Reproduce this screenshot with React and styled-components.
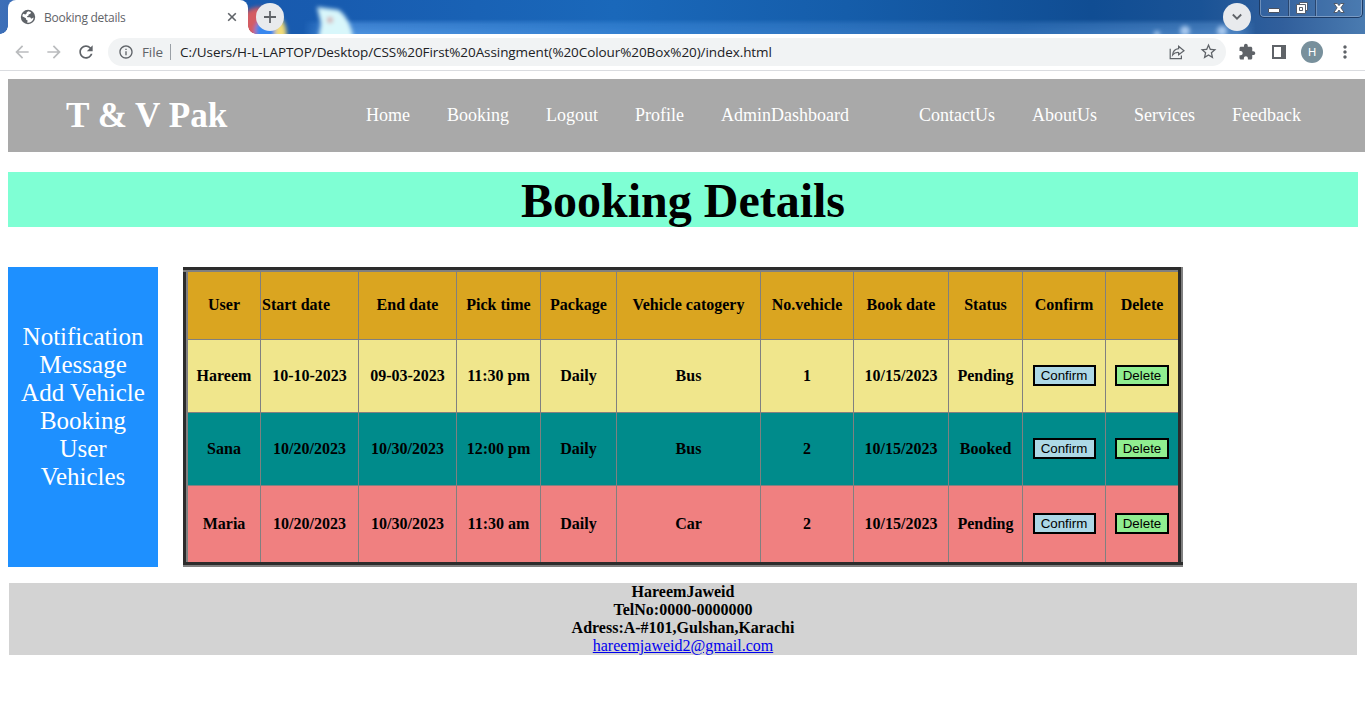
import React from "react";
import styled, { createGlobalStyle } from "styled-components";

const GlobalStyle = createGlobalStyle`
  * { box-sizing: border-box; }
  html, body { margin: 0; padding: 0; background: #fff; overflow: hidden; }
  body { font-family: "Liberation Serif", "Times New Roman", serif; font-size: 16px; color: #000; }
`;

const Window = styled.div`
  width: 1365px;
  height: 725px;
  overflow: hidden;
  display: flex;
  flex-direction: column;
  background: #fff;
`;

/* ---------- browser chrome ---------- */
const TabStrip = styled.div`
  position: relative;
  height: 34px;
  display: flex;
  align-items: flex-start;
  padding-left: 8px;
  overflow: hidden;
`;

const Wallpaper = styled.svg`
  position: absolute;
  inset: 0;
  display: block;
`;

const Tab = styled.div`
  position: relative;
  width: 240px;
  height: 34px;
  border-radius: 8px 8px 0 0;
  background: #fff;
  display: flex;
  align-items: center;
  padding: 0 10px 0 12px;
  &::before, &::after {
    content: "";
    position: absolute;
    bottom: 0;
    width: 8px;
    height: 8px;
  }
  &::before { left: -8px; background: radial-gradient(circle at 0 0, transparent 7.5px, #fff 8px); }
  &::after { right: -8px; background: radial-gradient(circle at 100% 0, transparent 7.5px, #fff 8px); }
`;

const TabTitle = styled.span`
  flex: 1;
  margin-left: 8px;
  font: 12px "Open Sans", "Noto Sans", sans-serif;
  letter-spacing: -0.25px;
  color: #5f6368;
  white-space: nowrap;
`;

const RoundButton = styled.div`
  position: relative;
  width: 28px;
  height: 28px;
  margin: 3px 0 0 ${(p) => p.$gap};
  border-radius: 50%;
  background: #e8eaed;
  display: flex;
  align-items: center;
  justify-content: center;
`;

const Caption = styled.div`
  position: relative;
  display: flex;
  width: 104px;
  height: 18px;
  margin-left: 8px;
  border: 1px solid #1c3b66;
  border-top: 0;
  border-radius: 0 0 5px 5px;
  box-shadow: inset 0 -1px 0 0 #7a9bc4, inset 1px 0 0 0 #6d8fba, inset -1px 0 0 0 #7a9bc4;
  background: rgba(80, 125, 180, 0.2);
`;

const CaptionButton = styled.div`
  width: ${(p) => p.$w};
  height: 16px;
  display: flex;
  align-items: center;
  justify-content: center;
  border-right: ${(p) => (p.$last ? "0" : "1px solid #29466f")};
  box-shadow: ${(p) => (p.$last ? "none" : "1px 0 0 0 #6d8fba")};
`;

const Toolbar = styled.div`
  height: 37px;
  display: flex;
  align-items: center;
  padding: 0 0 1px 12px;
  border-bottom: 1px solid #dadce0;
  background: #fff;
`;

const NavIcons = styled.div`
  display: flex;
  gap: 12px;
  width: 96px;
`;

const AddressBar = styled.div`
  width: 1118px;
  height: 28px;
  border-radius: 14px;
  background: #f1f3f4;
  display: flex;
  align-items: center;
  padding: 0 8px 0 10px;
  font: 14px "Open Sans", "Noto Sans", sans-serif;
`;

const Scheme = styled.span`
  margin-left: 8px;
  width: 28px;
  color: #5f6368;
  font-size: 13.5px;
  letter-spacing: -0.1px;
`;

const Divider = styled.span`
  width: 1px;
  height: 16px;
  margin-right: 9px;
  background: #9aa0a6;
`;

const Url = styled.span`
  flex: 1;
  color: #202124;
  white-space: nowrap;
  font-size: 13.5px;
  letter-spacing: ${(p) => p.$track};
`;

const BarIcons = styled.div`
  display: flex;
  gap: 12px;
`;

const ToolIcons = styled.div`
  display: flex;
  align-items: center;
  gap: 13px;
  margin-left: 12px;
`;

const Avatar = styled.div`
  width: 22px;
  height: 22px;
  margin: 0 -1px;
  border-radius: 50%;
  background: #78909c;
  color: #fff;
  display: flex;
  align-items: center;
  justify-content: center;
  font: 11.5px Roboto, sans-serif;
`;

/* ---------- page ---------- */
const Page = styled.div`
  padding: 8px 0 0 8px;
`;

const Header = styled.header`
  height: 73px;
  background: darkgray;
  color: #fff;
  display: flex;
  align-items: center;
  padding-left: 58px;
`;

const Brand = styled.div`
  width: 300px;
  font-size: 35.2px;
  font-weight: bold;
  white-space: nowrap;
`;

const Nav = styled.nav`
  display: flex;
  font-size: 18px;
`;

const NavLink = styled.span`
  width: ${(p) => p.$w}px;
  white-space: nowrap;
`;

const Title = styled.h1`
  width: 1350px;
  height: 55px;
  margin: 20px 0 40px;
  background: aquamarine;
  text-align: center;
  font-size: 48px;
  line-height: 57px;
`;

const Content = styled.main`
  display: flex;
  gap: 25px;
`;

const Sidebar = styled.aside`
  width: 150px;
  height: 300px;
  padding-top: 56px;
  background: dodgerblue;
  color: #fff;
  text-align: center;
  font-size: 25px;
  line-height: 28px;
`;

const Table = styled.table`
  width: 1000px;
  height: 300px;
  table-layout: fixed;
  border-collapse: collapse;
  border: 5px groove gray;
  font-weight: bold;
`;

const Row = styled.tr`
  height: ${(p) => p.$h}px;
  background: ${(p) => p.$bg};
`;

const Cell = styled.td`
  padding: 1px 1px ${(p) => p.$bottom || "1px"};
  border: 1px solid gray;
  text-align: ${(p) => p.$align || "center"};
  vertical-align: middle;
  white-space: nowrap;
`;

const ActionButton = styled.button`
  display: inline-block;
  height: 21px;
  width: ${(p) => p.$w};
  padding: 1px 0;
  border: 2px solid #000;
  border-radius: 0;
  background: ${(p) => p.$bg};
  color: #000;
  font: 13.333px/15px "Liberation Sans", Arial, sans-serif;
`;

const Footer = styled.footer`
  width: 1348px;
  height: 72px;
  margin: 16px 0 0 1px;
  background: lightgray;
  text-align: center;
  line-height: 18px;
  font-weight: bold;
`;

const MailLink = styled.span`
  color: #0000ee;
  font-weight: normal;
  text-decoration: underline;
`;

const G = "#5f6368";

function Icon({ d, color = G, size = 20 }) {
  return (
    <svg width={size} height={size} viewBox="0 0 24 24" fill={color}>
      <path d={d} />
    </svg>
  );
}

function Desktop() {
  return (
    <Wallpaper width="1365" height="34" viewBox="0 0 1365 34">
      <defs>
        <linearGradient id="sky" x1="0" x2="1" y1="0" y2="0">
          <stop offset="0" stopColor="#3d6fb8" />
          <stop offset="0.1" stopColor="#1957ac" />
          <stop offset="0.25" stopColor="#185cb0" />
          <stop offset="0.45" stopColor="#1a68ba" />
          <stop offset="0.62" stopColor="#155daa" />
          <stop offset="0.8" stopColor="#104d93" />
          <stop offset="0.88" stopColor="#1a5396" />
          <stop offset="0.94" stopColor="#315f9c" />
          <stop offset="1" stopColor="#4a7bb0" />
        </linearGradient>
        <linearGradient id="bar" x1="0" x2="1" y1="0" y2="0">
          <stop offset="0" stopColor="#4f93df" stopOpacity="0" />
          <stop offset="0.03" stopColor="#4f93df" />
          <stop offset="0.35" stopColor="#3480d0" />
          <stop offset="0.75" stopColor="#2e6db4" />
          <stop offset="0.98" stopColor="#4d84c2" />
          <stop offset="1" stopColor="#4d84c2" stopOpacity="0" />
        </linearGradient>
        <linearGradient id="fade" x1="0" x2="0" y1="0" y2="1">
          <stop offset="0" stopColor="#000" />
          <stop offset="0.35" stopColor="#aaa" />
          <stop offset="1" stopColor="#fff" />
        </linearGradient>
        <mask id="barMask"><rect x="300" y="19" width="960" height="15" fill="url(#fade)" /></mask>
        <filter id="softer" x="-30%" y="-30%" width="160%" height="160%"><feGaussianBlur stdDeviation="2" /></filter>
      </defs>
      <rect width="1365" height="34" fill="url(#sky)" />
      <rect x="303" y="19" width="953" height="15" fill="url(#bar)" mask="url(#barMask)" />
      <g filter="url(#softer)">
        <path d="M244 44V14Q252 5 266 8V24L258 44Z" fill="#d45b62" />
        <circle cx="268" cy="31" r="13" fill="#3987ee" />
        <path d="M276 15Q289 21 286 44H274Z" fill="#f3dc77" />
      </g>
      <g filter="url(#softer)">
        <path d="M317 7L339 10Q353 21 354 46H317L321 24Z" fill="#d9f7fb" />
        <circle cx="330" cy="20" r="3" fill="#d4a9ac" />
      </g>
      <g filter="url(#softer)" fill="#a8c9ef">
        <circle cx="1157" cy="34" r="3" />
        <circle cx="1185" cy="31" r="5" />
        <circle cx="1222" cy="31" r="5" />
      </g>
    </Wallpaper>
  );
}

function Browser() {
  return (
    <>
      <TabStrip>
        <Desktop />
        <Tab>
          <svg width="16" height="16" viewBox="0 0 16 16">
            <circle cx="8" cy="8" r="7.2" fill={G} />
            <path d="M8.4 2.3 11 3.2 10.4 4.8 8.6 5.4 8.4 6.8 7 7.2 7.4 8.2H10.2L11.2 9.8 13.7 8.6A5.8 5.8 0 0 1 7.2 13.8L7.6 11.6 6 10.6 5.9 9.2 2.3 7.2A5.8 5.8 0 0 1 3.2 4.8L5.4 5.6 6.6 4.6 6.8 3.2Z" fill="#fff" />
          </svg>
          <TabTitle>Booking details</TabTitle>
          <svg width="12" height="12" viewBox="0 0 12 12" stroke={G} strokeWidth="1.6">
            <path d="M2.2 2.2 9.8 9.8M9.8 2.2 2.2 9.8" />
          </svg>
        </Tab>
        <RoundButton $gap="8px">
          <svg width="14" height="14" viewBox="0 0 14 14" stroke={G} strokeWidth="1.8"><path d="M7 1V13M1 7H13" /></svg>
        </RoundButton>
        <RoundButton $gap="939px">
          <svg width="12" height="8" viewBox="0 0 12 8" fill="none" stroke={G} strokeWidth="1.8"><path d="M1.8 1.5 6 5.7 10.2 1.5" /></svg>
        </RoundButton>
        <Caption>
          <CaptionButton $w="29px">
            <svg width="14" height="14" viewBox="0 0 14 14"><rect x="1.5" y="7.5" width="11" height="4" rx=".5" fill="#fff" stroke="#4b5260" /></svg>
          </CaptionButton>
          <CaptionButton $w="27px">
            <svg width="14" height="14" viewBox="0 0 14 14" fill="#fff" stroke="#4b5260" strokeWidth=".9" fillRule="evenodd">
              <path d="M4.5 1.5H12.5V9.5H4.5Z" />
              <path d="M1.5 3.5H10.5V12.5H1.5ZM4.5 6.5H7.5V9.5H4.5Z" />
            </svg>
          </CaptionButton>
          <CaptionButton $w="46px" $last>
            <svg width="14" height="12" viewBox="0 0 14 12"><path d="M2 1.5H5.3L7 3.6 8.7 1.5H12L8.9 5.8 12.2 10.5H8.8L7 8 5.2 10.5H1.8L5.1 5.8Z" fill="#fff" stroke="#4b5260" strokeWidth=".9" /></svg>
          </CaptionButton>
        </Caption>
      </TabStrip>
      <Toolbar>
        <NavIcons>
          <Icon color="#babcbe" d="M20 11H7.83l5.59-5.59L12 4l-8 8 8 8 1.41-1.41L7.83 13H20v-2z" />
          <Icon color="#babcbe" d="M12 4l-1.41 1.41L16.17 11H4v2h12.17l-5.58 5.59L12 20l8-8z" />
          <Icon d="M17.65 6.35C16.2 4.9 14.21 4 12 4c-4.42 0-7.99 3.58-7.99 8s3.57 8 7.99 8c3.73 0 6.84-2.55 7.73-6h-2.08c-.82 2.33-3.04 4-5.65 4-3.31 0-6-2.69-6-6s2.69-6 6-6c1.66 0 3.14.69 4.22 1.78L13 11h7V4l-2.35 2.35z" />
        </NavIcons>
        <AddressBar>
          <Icon size={16} d="M11 7h2v2h-2zm0 4h2v6h-2zm1-9C6.48 2 2 6.48 2 12s4.48 10 10 10 10-4.48 10-10S17.52 2 12 2zm0 18c-4.41 0-8-3.59-8-8s3.59-8 8-8 8 3.59 8 8-3.59 8-8 8z" />
          <Scheme>File</Scheme>
          <Divider />
          <Url $track="-0.076px">C:/Users/H-L-LAPTOP/Desktop/CSS%20First%20Assingment(%20Colour%20Box%20)/index.html</Url>
          <BarIcons>
            <svg width="20" height="20" viewBox="0 0 20 20" fill="none" stroke={G} strokeWidth="1.2">
              <path d="M3.2 6.8V16.6H14.4V13.6M11.6 4.2 17 8.7 11.6 12.8V10.5C8.8 10.3 7 11.2 5.6 13 5.9 9.6 8 7.1 11.6 6.7Z" />
            </svg>
            <Icon size={19} d="M22 9.24l-7.19-.62L12 2 9.19 8.63 2 9.24l5.46 4.73L5.82 21 12 17.27 18.18 21l-1.63-7.03L22 9.24zM12 15.4l-3.76 2.27 1-4.28-3.32-2.88 4.38-.38L12 6.1l1.71 4.04 4.38.38-3.32 2.88 1 4.28L12 15.4z" />
          </BarIcons>
        </AddressBar>
        <ToolIcons>
          <Icon d="M20.5 11H19V7c0-1.1-.9-2-2-2h-4V3.5C13 2.12 11.88 1 10.5 1S8 2.12 8 3.5V5H4c-1.1 0-1.99.9-1.99 2v3.8H3.5c1.49 0 2.7 1.21 2.7 2.7s-1.21 2.7-2.7 2.7H2V20c0 1.1.9 2 2 2h3.8v-1.5c0-1.49 1.21-2.7 2.7-2.7 1.49 0 2.7 1.21 2.7 2.7V22H17c1.1 0 2-.9 2-2v-4h1.5c1.38 0 2.5-1.12 2.5-2.5S21.88 11 20.5 11z" size={18} />
          <svg width="20" height="20" viewBox="0 0 20 20" fill={G} fillRule="evenodd"><path d="M3 3H17V17H3ZM5 5V15H12V5Z" /></svg>
          <Avatar>H</Avatar>
          <Icon d="M12 8c1.1 0 2-.9 2-2s-.9-2-2-2-2 .9-2 2 .9 2 2 2zm0 2c-1.1 0-2 .9-2 2s.9 2 2 2 2-.9 2-2-.9-2-2-2zm0 6c-1.1 0-2 .9-2 2s.9 2 2 2 2-.9 2-2-.9-2-2-2z" />
        </ToolIcons>
      </Toolbar>
    </>
  );
}

const LINKS = [
  ["Home", 81], ["Booking", 99], ["Logout", 89], ["Profile", 86], ["AdminDashboard", 198],
  ["ContactUs", 113], ["AboutUs", 102], ["Services", 98], ["Feedback", 72],
];
const SIDE = ["Notification", "Message", "Add Vehicle", "Booking", "User", "Vehicles"];
const COLS = [75, 98, 98, 84, 76, 144, 93, 95, 74, 83, 75];
const HEAD = ["User", "Start date", "End date", "Pick time", "Package", "Vehicle catogery", "No.vehicle", "Book date", "Status", "Confirm", "Delete"];
const ROWS = [
  { bg: "khaki", h: 73, cells: ["Hareem", "10-10-2023", "09-03-2023", "11:30 pm", "Daily", "Bus", "1", "10/15/2023", "Pending"] },
  { bg: "darkcyan", h: 73, cells: ["Sana", "10/20/2023", "10/30/2023", "12:00 pm", "Daily", "Bus", "2", "10/15/2023", "Booked"] },
  { bg: "lightcoral", h: 79, cells: ["Maria", "10/20/2023", "10/30/2023", "11:30 am", "Daily", "Car", "2", "10/15/2023", "Pending"] },
];

export default function App() {
  return (
    <Window>
      <GlobalStyle />
      <Browser />
      <Page>
        <Header>
          <Brand>T &amp; V Pak</Brand>
          <Nav>
            {LINKS.map(([label, w]) => <NavLink key={label} $w={w}>{label}</NavLink>)}
          </Nav>
        </Header>
        <Title>Booking Details</Title>
        <Content>
          <Sidebar>{SIDE.map((s) => <div key={s}>{s}</div>)}</Sidebar>
          <Table>
            <colgroup>{COLS.map((w, i) => <col key={i} width={w} />)}</colgroup>
            <tbody>
              <Row $bg="goldenrod" $h={70}>
                {HEAD.map((h) => <Cell key={h} $bottom="3px" $align={h === "Start date" ? "left" : "center"}>{h}</Cell>)}
              </Row>
              {ROWS.map((r) => (
                <Row key={r.bg} $bg={r.bg} $h={r.h}>
                  {r.cells.map((c, i) => <Cell key={i}>{c}</Cell>)}
                  <Cell $bottom="3px"><ActionButton $w="63px" $bg="lightblue">Confirm</ActionButton></Cell>
                  <Cell $bottom="3px"><ActionButton $w="54px" $bg="lightgreen">Delete</ActionButton></Cell>
                </Row>
              ))}
            </tbody>
          </Table>
        </Content>
        <Footer>
          <div>HareemJaweid</div>
          <div>TelNo:0000-0000000</div>
          <div>Adress:A-#101,Gulshan,Karachi</div>
          <MailLink>hareemjaweid2@gmail.com</MailLink>
        </Footer>
      </Page>
    </Window>
  );
}
